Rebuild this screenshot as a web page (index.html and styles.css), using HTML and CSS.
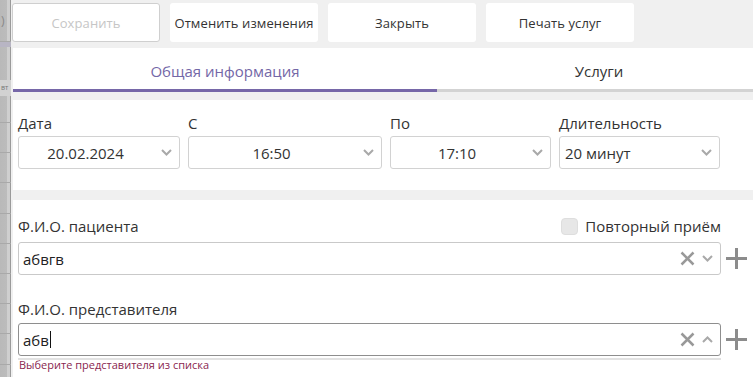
FILE: index.html
```html
<!DOCTYPE html>
<html lang="ru">
<head>
<meta charset="utf-8">
<title>Запись</title>
<link rel="stylesheet" href="styles.css">
</head>
<body>
<div class="page">
  <div class="backdrop">
    <div class="bd-top"><span class="bd-paren">)</span></div>
    <div class="bd-band"></div>
    <div class="bd-gap"></div>
    <div class="bd-head"><span class="bd-vt">вт</span></div>
    <div class="bd-rows"></div>
  </div>
  <div class="modal">
    <div class="toolbar">
      <button class="btn btn-disabled">Сохранить</button>
      <button class="btn">Отменить изменения</button>
      <button class="btn">Закрыть</button>
      <button class="btn">Печать услуг</button>
    </div>
    <div class="tabs">
      <div class="tab tab-active">Общая информация</div>
      <div class="tab tab-second">Услуги</div>
    </div>
    <div class="panel panel-time">
      <div class="field field-date">
        <div class="label">Дата</div>
        <div class="select"><span class="select-value">20.02.2024</span><span class="chev"><svg width="11" height="7" viewBox="0 0 11 7"><path d="M1 1 L5.5 5.5 L10 1" fill="none" stroke="#a9a9a9" stroke-width="2"/></svg></span></div>
      </div>
      <div class="field">
        <div class="label">С</div>
        <div class="select"><span class="select-value">16:50</span><span class="chev"><svg width="11" height="7" viewBox="0 0 11 7"><path d="M1 1 L5.5 5.5 L10 1" fill="none" stroke="#a9a9a9" stroke-width="2"/></svg></span></div>
      </div>
      <div class="field">
        <div class="label">По</div>
        <div class="select"><span class="select-value">17:10</span><span class="chev"><svg width="11" height="7" viewBox="0 0 11 7"><path d="M1 1 L5.5 5.5 L10 1" fill="none" stroke="#a9a9a9" stroke-width="2"/></svg></span></div>
      </div>
      <div class="field">
        <div class="label">Длительность</div>
        <div class="select"><span class="select-value select-left">20 минут</span><span class="chev"><svg width="11" height="7" viewBox="0 0 11 7"><path d="M1 1 L5.5 5.5 L10 1" fill="none" stroke="#a9a9a9" stroke-width="2"/></svg></span></div>
      </div>
    </div>
    <div class="panel panel-person">
      <div class="label-row">
        <span class="label">Ф.И.О. пациента</span>
        <span class="repeat"><span class="checkbox"></span><span class="label">Повторный приём</span></span>
      </div>
      <div class="combo-row">
        <div class="combo">
          <span class="combo-value">абвгв</span>
          <svg class="ic-x" width="15" height="15" viewBox="0 0 15 15"><path d="M1.5 1.5 L13.5 13.5 M13.5 1.5 L1.5 13.5" stroke="#999" stroke-width="2.5" fill="none"/></svg>
          <svg class="ic-chev" width="11" height="7" viewBox="0 0 11 7"><path d="M1 1 L5.5 5.5 L10 1" fill="none" stroke="#a9a9a9" stroke-width="2"/></svg>
        </div>
        <svg class="ic-plus" width="21" height="21" viewBox="0 0 21 21"><path d="M10.5 0 V21 M0 10.5 H21" stroke="#8c8c8c" stroke-width="3" fill="none"/></svg>
      </div>
      <div class="label label-rep">Ф.И.О. представителя</div>
      <div class="combo-row">
        <div class="combo combo-focus">
          <span class="combo-value">абв<span class="caret"></span></span>
          <svg class="ic-x" width="15" height="15" viewBox="0 0 15 15"><path d="M1.5 1.5 L13.5 13.5 M13.5 1.5 L1.5 13.5" stroke="#999" stroke-width="2.5" fill="none"/></svg>
          <svg class="ic-chev" width="11" height="7" viewBox="0 0 11 7"><path d="M1 6 L5.5 1.5 L10 6" fill="none" stroke="#a9a9a9" stroke-width="2"/></svg>
        </div>
        <svg class="ic-plus" width="21" height="21" viewBox="0 0 21 21"><path d="M10.5 0 V21 M0 10.5 H21" stroke="#8c8c8c" stroke-width="3" fill="none"/></svg>
      </div>
      <div class="dropdown-edge"></div>
      <div class="error">Выберите представителя из списка</div>
    </div>
  </div>
</div>
</body>
</html>
```

FILE: styles.css
```css
* { box-sizing: border-box; }
html, body { margin: 0; padding: 0; }
body {
  width: 753px;
  height: 377px;
  overflow: hidden;
  font-family: "Open Sans", "Noto Sans", sans-serif;
  color: #333;
  background: #f0f0f0;
}
.page {
  display: flex;
  height: 377px;
}
.backdrop {
  width: 11px;
  flex: none;
  display: flex;
  flex-direction: column;
  background: linear-gradient(to right, #b9b9b9 0, #bcbcbc 7px, #cfcfcf 7px, #cfcfcf 10px, #9a9a9a 10px);
  overflow: hidden;
}
.bd-top {
  height: 42px;
  border-bottom: 1px solid #a8a8a8;
  font-size: 12px;
  line-height: 42px;
  color: #888;
}
.bd-paren { margin-left: 1px; }
.bd-band { height: 5px; background: #b8b5c4; }
.bd-gap { height: 33px; }
.bd-head {
  height: 16px;
  background: #d2d2d2;
  font-size: 7px;
  line-height: 16px;
  color: #777;
  white-space: nowrap;
}
.bd-vt { margin-left: 1px; }
.bd-rows {
  flex: 1;
  background: repeating-linear-gradient(to bottom, transparent 0, transparent 26px, #a9a9a9 26px, #a9a9a9 27px, transparent 27px, transparent 30.2px);
}
.modal {
  flex: 1;
  min-width: 0;
  background: #f0f0f0;
  padding-left: 1px;
  overflow: hidden;
}
.toolbar {
  display: flex;
  gap: 10px;
  padding-top: 3px;
}
.btn {
  width: 148px;
  height: 39px;
  border: none;
  border-radius: 3px;
  background: #fff;
  font-family: inherit;
  font-size: 13px;
  letter-spacing: 0.1px;
  color: #333;
  padding: 0;
}
.btn-disabled {
  border: 1px solid #cfcfcf;
  color: #c6c6c6;
}
.tabs {
  display: flex;
  margin-top: 6px;
  margin-left: 1px;
  width: 742px;
  background: #fff;
}
.tab {
  padding: 13px 0 8px;
  font-size: 15px;
  line-height: 20px;
  text-align: center;
  border-bottom: 3px solid #d3d3d3;
  color: #333;
}
.tab-active {
  width: 424px;
  color: #7467a7;
  border-bottom-color: #7667a8;
}
.tab-second {
  flex: 1;
  padding-left: 6px;
}
.panel {
  background: #fff;
  margin-left: 1px;
}
.panel-time {
  margin-top: 8px;
  padding: 13px 0 21px 5px;
  display: grid;
  grid-template-columns: 162px 194px 161px 161px;
  column-gap: 8px;
}
.label {
  font-size: 15px;
  line-height: 20px;
  color: #333;
}
.field .label { margin-bottom: 3px; }
.select {
  display: flex;
  align-items: center;
  height: 33px;
  border: 1px solid #d2d2d2;
  border-radius: 3px;
  font-size: 15px;
}
.select-value {
  flex: 1;
  text-align: center;
  padding-top: 1px;
  color: #333;
}
.select-left {
  text-align: left;
  padding-left: 5px;
}
.chev {
  width: 27px;
  display: flex;
  justify-content: center;
  padding-left: 2px;
}
.chev svg { display: block; }
.panel-person {
  margin-top: 10px;
  padding: 16px 0 0 5px;
  height: 200px;
}
.label-row {
  display: flex;
  justify-content: space-between;
  align-items: center;
  width: 703px;
  margin-bottom: 6px;
}
.repeat {
  display: flex;
  align-items: center;
  gap: 7px;
}
.checkbox {
  width: 17px;
  height: 17px;
  border-radius: 4px;
  background: #e7e7e7;
  border: 1px solid #dedede;
}
.combo-row {
  display: flex;
  align-items: center;
  gap: 5px;
}
.combo {
  width: 703px;
  height: 33px;
  border: 1px solid #c9c9c9;
  border-radius: 3px;
  display: flex;
  align-items: center;
  padding: 0 7px 0 4px;
  font-size: 15px;
}
.combo-focus { border-color: #8e8e8e; }
.combo-value {
  flex: 1;
  color: #222;
  display: flex;
  align-items: center;
}
.caret {
  display: inline-block;
  width: 1px;
  height: 17px;
  background: #111;
  margin-left: 1px;
}
.ic-x { display: block; margin-right: 7px; }
.ic-chev { display: block; }
.ic-plus { display: block; }
.label-rep {
  margin-top: 24px;
  margin-bottom: 4px;
}
.dropdown-edge {
  width: 703px;
  height: 2px;
  margin-top: 2px;
  background: #e2e2e2;
}
.error {
  font-size: 11px;
  line-height: 12px;
  margin-top: -1px;
  margin-left: 1px;
  color: #8a1f50;
}
```
